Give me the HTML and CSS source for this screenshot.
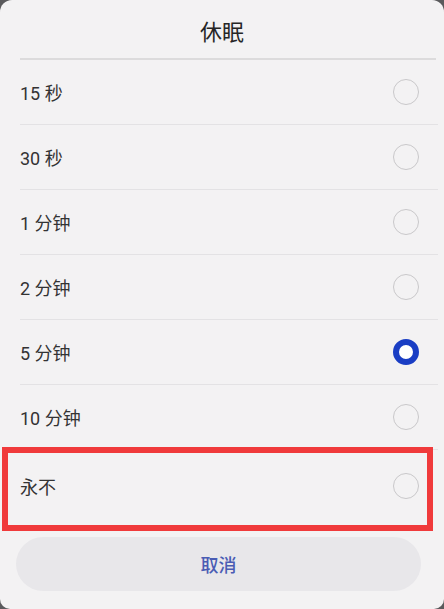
FILE: index.html
```html
<!DOCTYPE html>
<html lang="zh">
<head>
<meta charset="utf-8">
<title>休眠</title>
<link rel="stylesheet" href="styles.css">
</head>
<body>
<div class="dialog">
  <div class="title">休眠</div>
  <div class="title-rule"></div>
  <ul class="options">
    <li class="option"><span class="label">15 秒</span><span class="radio"></span></li>
    <li class="option"><span class="label">30 秒</span><span class="radio"></span></li>
    <li class="option"><span class="label">1 分钟</span><span class="radio"></span></li>
    <li class="option"><span class="label">2 分钟</span><span class="radio"></span></li>
    <li class="option"><span class="label">5 分钟</span><span class="radio checked"></span></li>
    <li class="option"><span class="label">10 分钟</span><span class="radio"></span></li>
    <li class="option last"><span class="label">永不</span><span class="radio"></span></li>
  </ul>
  <div class="actions">
    <button class="cancel" type="button">取消</button>
  </div>
  <div class="highlight"></div>
</div>
</body>
</html>
```

FILE: styles.css
```css
html, body {
  margin: 0;
  padding: 0;
  background: #5a5a5c;
}
body {
  width: 444px;
  height: 609px;
  overflow: hidden;
  font-family: Roboto, "Noto Sans CJK SC", "Noto Sans", sans-serif;
}
.dialog {
  position: relative;
  width: 444px;
  height: 609px;
  box-sizing: border-box;
  background: #f3f2f3;
  border-radius: 12px 12px 10px 10px;
  display: flex;
  flex-direction: column;
}
.title {
  height: 57px;
  display: flex;
  align-items: center;
  justify-content: center;
  font-size: 22px;
  color: #262626;
  padding-top: 1px;
}
.title-rule {
  height: 2px;
  margin: 0 8px 0 20px;
  background: #dcdbdc;
}
.options {
  list-style: none;
  margin: 0;
  padding: 0 0 0 20px;
}
.option {
  height: 64px;
  display: flex;
  align-items: center;
  justify-content: space-between;
  border-bottom: 1px solid #e3e2e4;
  margin-right: 6px;
}
.option.last {
  height: 72px;
  border-bottom: none;
}
.label {
  font-size: 18px;
  color: #333333;
}
.radio {
  width: 26px;
  height: 26px;
  box-sizing: border-box;
  border: 1.5px solid #c9c8ca;
  border-radius: 50%;
  margin-right: 19px;
  background: transparent;
}
.radio.checked {
  border: 6px solid #1a3ec4;
  background: #ffffff;
}
.actions {
  padding: 15px 23px 0 16px;
}
.cancel {
  width: 100%;
  height: 54px;
  border: none;
  border-radius: 27px;
  background: #e8e7ea;
  font-family: "Noto Sans CJK SC", "Noto Sans", sans-serif;
  font-size: 18px;
  font-weight: 500;
  color: #4a5cb4;
  padding: 0;
}
.highlight {
  position: absolute;
  left: 2px;
  top: 447px;
  width: 431px;
  height: 84px;
  box-sizing: border-box;
  border: 6px solid #f03a3b;
}
```
